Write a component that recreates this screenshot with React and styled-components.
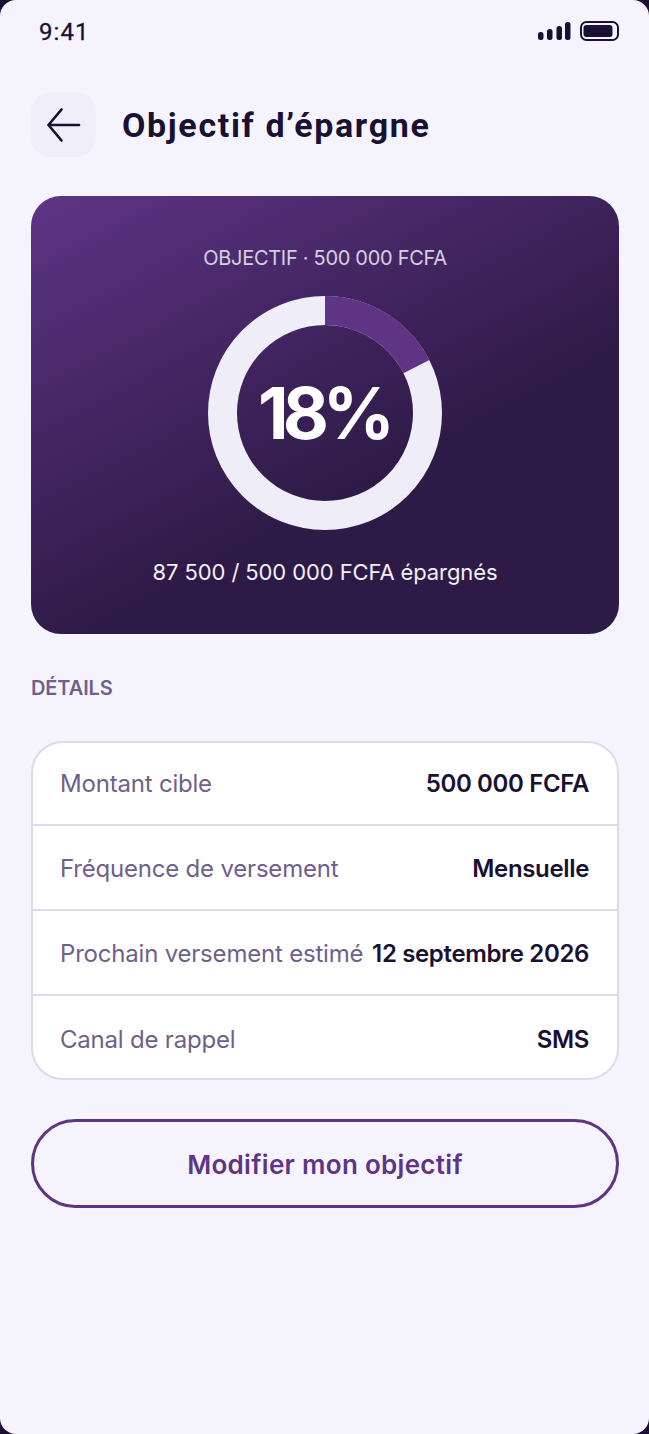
import React from "react";
import styled, { createGlobalStyle } from "styled-components";

const Global = createGlobalStyle`
  html, body { margin: 0; padding: 0; background: #1a1033; }
  #root { width: 649px; height: 1434px; }
`;
const Screen = styled.div`
  width: 649px; height: 1434px; box-sizing: border-box;
  background: #f5f4fc; border-radius: 16px; overflow: hidden;
  padding: 0 30px 0 31px; display: flex; flex-direction: column;
  font-family: Inter, sans-serif; color: #1a1033;
`;
const StatusBar = styled.div`
  height: 92px; flex: none; box-sizing: border-box; padding: 16px 0 0 8px;
  display: flex; justify-content: space-between; align-items: flex-start;
`;
const Time = styled.span`
  font: 400 24px/32px Roboto, sans-serif; letter-spacing: 1.1px;
  -webkit-text-stroke: 0.3px #1a1033;
`;
const StatusIcons = styled.svg`
  width: 82px; height: 22px; margin-top: 5px;
`;
const Header = styled.div`
  display: flex; align-items: center; gap: 26px; height: 65px; flex: none;
`;
const BackButton = styled.button`
  width: 65px; height: 65px; border: 0; border-radius: 20px; background: #f0eff9;
  padding: 0; display: flex; align-items: center; justify-content: center;
`;
const Title = styled.h1`
  margin: 1px 0 0; font: 700 34px/44px Roboto, sans-serif; letter-spacing: 1.65px;
`;
const HeroCard = styled.section`
  margin-top: 39px; height: 438px; box-sizing: border-box; border-radius: 30px; flex: none;
  background: linear-gradient(152deg, #5f3485 0%, #2e1a47 62%);
  display: flex; flex-direction: column; align-items: center; padding-top: 48px;
`;
const HeroLabel = styled.div`
  font: 400 20px/28px Inter, sans-serif; color: #d5cfe2; letter-spacing: -0.3px;
`;
const Ring = styled.div`
  position: relative; width: 234px; height: 234px; margin-top: 24px;
`;
const RingSvg = styled.svg`
  display: block; width: 234px; height: 234px;
`;
const Percent = styled.div`
  position: absolute; inset: 0; display: flex; align-items: center; justify-content: center;
  font: 700 71px/1 Inter, sans-serif; color: #fff; letter-spacing: -6px; padding-right: 3px;
`;
const HeroCaption = styled.div`
  margin-top: 26px; font: 400 22px/32px Inter, sans-serif; color: #f2f0f8; letter-spacing: -0.1px;
`;
const SectionLabel = styled.h2`
  margin: 40px 0 0; font: 600 20px/28px Inter, sans-serif; color: #6f5f8c; letter-spacing: -0.1px;
`;
const Details = styled.div`
  margin-top: 39px; border: 2px solid #dddbeb; border-radius: 32px; background: #fff; flex: none;
  overflow: hidden;
`;
const Row = styled.div`
  height: 85px; box-sizing: border-box; display: flex; align-items: center;
  justify-content: space-between; padding: 3px 28px 0 27px; white-space: nowrap;
  &:first-child { height: 81px; padding-top: 0; }
  &:last-child { height: 84px; padding-top: 5px; }
  & + & { border-top: 2px solid #dddbeb; }
`;
const RowLabel = styled.span`
  font: 400 24px/32px Inter, sans-serif; color: #6f5f8c; letter-spacing: -0.2px;
`;
const RowValue = styled.span`
  font: 600 24px/32px Inter, sans-serif; color: #1a1033; letter-spacing: -0.35px;
`;
const EditButton = styled.button`
  margin-top: 39px; height: 89px; flex: none; width: 100%; box-sizing: border-box;
  border: 3px solid #5f3485; border-radius: 45px; background: transparent; padding: 3px 0 0;
  font: 600 26px/32px Inter, sans-serif; color: #5f3485; letter-spacing: 0.3px;
`;

const rows = [
  ["Montant cible", "500 000 FCFA"],
  ["Fréquence de versement", "Mensuelle"],
  ["Prochain versement estimé", "12 septembre 2026"],
  ["Canal de rappel", "SMS"],
];

const R = 102.5;
const C = 2 * Math.PI * R;

export default function App() {
  return (
    <>
      <Global />
      <Screen>
        <StatusBar>
          <Time>9:41</Time>
          <StatusIcons viewBox="0 0 82 22" aria-hidden="true">
            <rect x="1" y="11" width="5.5" height="8" rx="2.5" fill="#1a1033" />
            <rect x="10" y="8" width="5.5" height="11" rx="2.5" fill="#1a1033" />
            <rect x="19.5" y="5" width="5.5" height="14" rx="2.5" fill="#1a1033" />
            <rect x="28" y="1" width="5.5" height="18" rx="2.5" fill="#1a1033" />
            <rect x="44" y="1" width="37" height="18" rx="5.5" fill="none" stroke="#1a1033" strokeWidth="2" />
            <rect x="46.5" y="4" width="29" height="12" rx="3" fill="#1a1033" />
          </StatusIcons>
        </StatusBar>
        <Header>
          <BackButton aria-label="Retour">
            <svg width="36" height="36" viewBox="0 0 36 36" fill="none" stroke="#1a1033" strokeWidth="2.7" strokeLinecap="round" strokeLinejoin="round">
              <path d="M33 18H3" />
              <path d="M15.5 2.5 2.5 18l13 15.5" />
            </svg>
          </BackButton>
          <Title>Objectif d’épargne</Title>
        </Header>
        <HeroCard>
          <HeroLabel>OBJECTIF · 500 000 FCFA</HeroLabel>
          <Ring>
            <RingSvg viewBox="0 0 234 234">
              <circle cx="117" cy="117" r={R} fill="none" stroke="#efedf8" strokeWidth="29" />
              <circle
                cx="117" cy="117" r={R} fill="none" stroke="#5f3485" strokeWidth="29"
                strokeDasharray={`${C * 0.175} ${C}`}
                transform="rotate(-90 117 117)"
              />
            </RingSvg>
            <Percent>18%</Percent>
          </Ring>
          <HeroCaption>87 500 / 500 000 FCFA épargnés</HeroCaption>
        </HeroCard>
        <SectionLabel>DÉTAILS</SectionLabel>
        <Details>
          {rows.map(([label, value]) => (
            <Row key={label}>
              <RowLabel>{label}</RowLabel>
              <RowValue>{value}</RowValue>
            </Row>
          ))}
        </Details>
        <EditButton>Modifier mon objectif</EditButton>
      </Screen>
    </>
  );
}
